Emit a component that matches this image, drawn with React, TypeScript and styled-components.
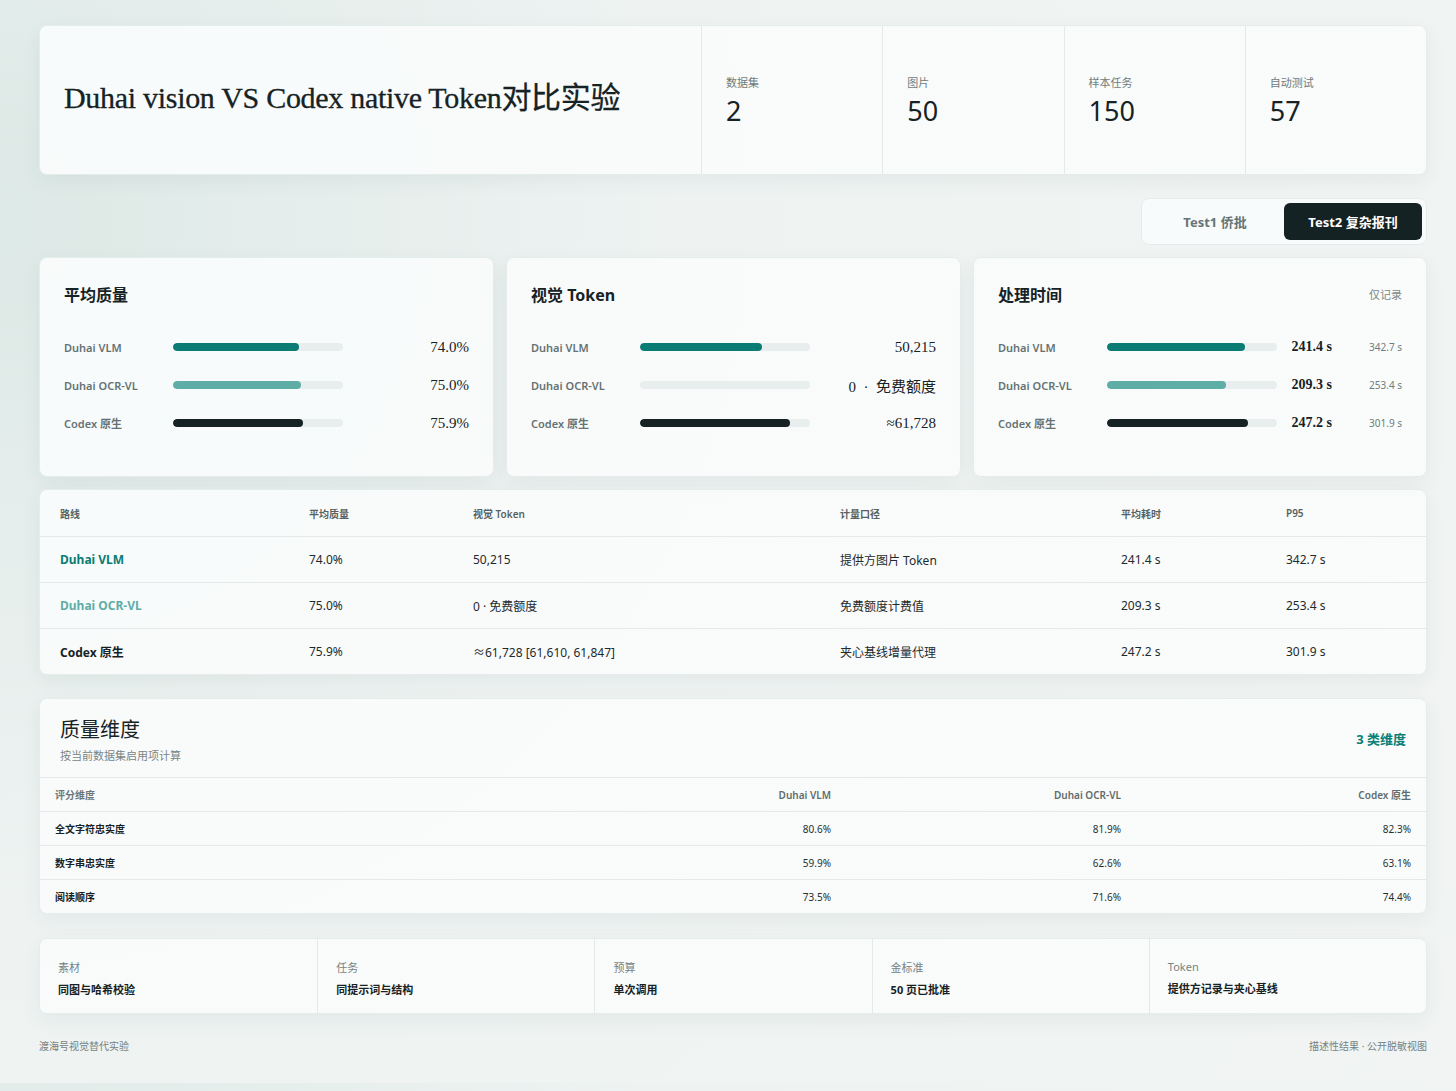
import styled, { createGlobalStyle } from "styled-components";

const Global = createGlobalStyle`
  body {
    margin: 0;
    background: radial-gradient(circle at 0% 20%, #dde9e6 0%, #eef3f2 40%, #f1f4f3 100%);
    font-family: "Noto Sans", "Noto Sans CJK SC", sans-serif;
    color: #162224;
  }
`;

const Page = styled.div`
  padding: 25px 29px 30px 39px;
  display: flex;
  flex-direction: column;
`;

const Card = styled.div`
  background: rgba(250, 252, 252, 0.92);
  border: 1px solid #e6ecec;
  border-radius: 8px;
  box-shadow: 0 6px 20px rgba(40, 70, 70, 0.06);
`;

const Header = styled(Card)`
  display: grid;
  grid-template-columns: 661px repeat(4, 1fr);
  height: 148px;
`;

const Title = styled.h1`
  margin: 0;
  padding-left: 24px;
  align-self: center;
  margin-top: -10px;
  font-family: "Liberation Serif", "Noto Sans CJK SC", serif;
  font-weight: 400;
  font-size: 30px;
  letter-spacing: -0.3px;
  -webkit-text-stroke: 0.3px #162224;
`;

const Stat = styled.div`
  border-left: 1px solid #e4eaea;
  padding: 48px 24px 0;
`;
const StatLabel = styled.div`
  font-size: 11px;
  color: #6e7b7c;
`;
const StatValue = styled.div`
  font-size: 27px;
  margin-top: 2px;
  color: #172224;
`;

const TabsRow = styled.div`
  display: flex;
  justify-content: flex-end;
  margin: 23px 0 12px;
`;
const Tabs = styled.div`
  display: flex;
  padding: 4px;
  background: #f8fbfb;
  border: 1px solid #e6ecec;
  border-radius: 8px;
`;
const Tab = styled.div<{ $active?: boolean }>`
  width: 138px;
  height: 37px;
  display: flex;
  align-items: center;
  justify-content: center;
  font-size: 13px;
  font-weight: 700;
  border-radius: 6px;
  color: ${(p) => (p.$active ? "#fff" : "#667475")};
  background: ${(p) => (p.$active ? "#152224" : "transparent")};
`;

const Metrics = styled.div`
  display: grid;
  grid-template-columns: 455px 455px 1fr;
  gap: 12px;
`;
const MetricCard = styled(Card)`
  height: 220px;
  box-sizing: border-box;
  padding: 24px 24px 0;
`;
const MetricHead = styled.div`
  display: flex;
  justify-content: space-between;
  align-items: center;
  margin-bottom: 22px;
`;
const MetricTitle = styled.div`
  font-size: 16px;
  font-weight: 700;
`;
const Note = styled.div`
  font-size: 11px;
  color: #7d898a;
`;
const BarRow = styled.div<{ $extra?: boolean }>`
  display: grid;
  grid-template-columns: ${(p) => (p.$extra ? "109px 170px 1fr 70px" : "109px 170px 1fr")};
  align-items: center;
  height: 38px;
`;
const BarLabel = styled.div`
  font-size: 11px;
  font-weight: 600;
  color: #657273;
`;
const Track = styled.div`
  height: 8px;
  border-radius: 4px;
  background: #e8eded;
  overflow: hidden;
`;
const Fill = styled.div<{ $c: string }>`
  height: 100%;
  border-radius: 4px;
  background: ${(p) => p.$c};
`;
const Val = styled.div`
  text-align: right;
  font-family: "Liberation Serif", "Noto Sans CJK SC", serif;
  font-size: 15px;
`;
const Sub = styled.div`
  text-align: right;
  font-size: 10px;
  color: #707d7e;
`;

const Table = styled(Card)`
  margin-top: 12px;
`;
const TRow = styled.div<{ $head?: boolean }>`
  display: grid;
  grid-template-columns: 249px 164px 367px 281px 165px 1fr;
  padding-left: 20px;
  align-items: center;
  height: ${(p) => (p.$head ? "46px" : "45px")};
  font-size: ${(p) => (p.$head ? "10px" : "12px")};
  font-weight: ${(p) => (p.$head ? 600 : 400)};
  color: ${(p) => (p.$head ? "#56625f" : "#1e2a2c")};
  & + & { border-top: 1px solid #e3e9e9; }
`;
const Route = styled.div<{ $c: string }>`
  font-weight: 700;
  color: ${(p) => p.$c};
`;

const Quality = styled(Card)`
  margin-top: 23px;
`;
const QHead = styled.div`
  display: flex;
  justify-content: space-between;
  align-items: center;
  padding: 15px 20px 14px;
  border-bottom: 1px solid #e3e9e9;
`;
const QTitle = styled.div`
  font-family: "Liberation Serif", "Noto Sans CJK SC", serif;
  font-size: 20px;
`;
const QSub = styled.div`
  font-size: 11px;
  color: #798586;
  margin-top: 4px;
`;
const QBadge = styled.div`
  font-size: 13px;
  font-weight: 700;
  color: #0a7f77;
`;
const QRow = styled.div<{ $head?: boolean }>`
  display: grid;
  grid-template-columns: 1fr 290px 290px 290px;
  padding: 0 15px;
  align-items: center;
  height: 33px;
  font-size: 10px;
  font-weight: ${(p) => (p.$head ? 600 : 400)};
  color: ${(p) => (p.$head ? "#5f6c6d" : "#26302f")};
  & + & { border-top: 1px solid #e3e9e9; }
  & > div:not(:first-child) { text-align: right; }
  & > div:first-child { font-weight: 600; color: ${(p) => (p.$head ? "#6b7778" : "#172224")}; }
`;

const Facts = styled(Card)`
  margin-top: 24px;
  display: grid;
  grid-template-columns: repeat(5, 1fr);
  height: 74px;
`;
const Fact = styled.div`
  padding: 20px 18px 0;
  & + & { border-left: 1px solid #e3e9e9; }
`;
const FactLabel = styled.div`
  font-size: 11px;
  color: #778384;
`;
const FactValue = styled.div`
  font-size: 11px;
  font-weight: 700;
  margin-top: 6px;
`;

const Foot = styled.div`
  display: flex;
  justify-content: space-between;
  margin-top: 24px;
  font-size: 10px;
  color: #768283;
`;

const C1 = "#0a7c74";
const C2 = "#5fada7";
const C3 = "#172224";

export default function App() {
  return (
    <>
      <Global />
      <Page>
        <Header>
          <Title>Duhai vision VS Codex native Token对比实验</Title>
          {[
            ["数据集", "2"],
            ["图片", "50"],
            ["样本任务", "150"],
            ["自动测试", "57"],
          ].map(([l, v]) => (
            <Stat key={l}>
              <StatLabel>{l}</StatLabel>
              <StatValue>{v}</StatValue>
            </Stat>
          ))}
        </Header>

        <TabsRow>
          <Tabs>
            <Tab>Test1 侨批</Tab>
            <Tab $active>Test2 复杂报刊</Tab>
          </Tabs>
        </TabsRow>

        <Metrics>
          <MetricCard>
            <MetricHead><MetricTitle>平均质量</MetricTitle></MetricHead>
            {[
              ["Duhai VLM", 74, C1, "74.0%"],
              ["Duhai OCR-VL", 75, C2, "75.0%"],
              ["Codex 原生", 76.5, C3, "75.9%"],
            ].map(([l, w, c, v]) => (
              <BarRow key={l as string}>
                <BarLabel>{l}</BarLabel>
                <Track><Fill $c={c as string} style={{ width: `${w}%` }} /></Track>
                <Val>{v}</Val>
              </BarRow>
            ))}
          </MetricCard>
          <MetricCard>
            <MetricHead><MetricTitle>视觉 Token</MetricTitle></MetricHead>
            {[
              ["Duhai VLM", 72, C1, "50,215"],
              ["Duhai OCR-VL", 0, C2, "0  ·  免费额度"],
              ["Codex 原生", 88, C3, "≈61,728"],
            ].map(([l, w, c, v]) => (
              <BarRow key={l as string}>
                <BarLabel>{l}</BarLabel>
                <Track><Fill $c={c as string} style={{ width: `${w}%` }} /></Track>
                <Val style={{ whiteSpace: "pre" }}>{v}</Val>
              </BarRow>
            ))}
          </MetricCard>
          <MetricCard>
            <MetricHead>
              <MetricTitle>处理时间</MetricTitle>
              <Note>仅记录</Note>
            </MetricHead>
            {[
              ["Duhai VLM", 81, C1, "241.4 s", "342.7 s"],
              ["Duhai OCR-VL", 70, C2, "209.3 s", "253.4 s"],
              ["Codex 原生", 83, C3, "247.2 s", "301.9 s"],
            ].map(([l, w, c, v, s]) => (
              <BarRow $extra key={l as string}>
                <BarLabel>{l}</BarLabel>
                <Track><Fill $c={c as string} style={{ width: `${w}%` }} /></Track>
                <Val style={{ fontWeight: 700, fontSize: 14 }}>{v}</Val>
                <Sub>{s}</Sub>
              </BarRow>
            ))}
          </MetricCard>
        </Metrics>

        <Table>
          <TRow $head>
            <div>路线</div><div>平均质量</div><div>视觉 Token</div><div>计量口径</div><div>平均耗时</div><div>P95</div>
          </TRow>
          {[
            ["Duhai VLM", C1, "74.0%", "50,215", "提供方图片 Token", "241.4 s", "342.7 s"],
            ["Duhai OCR-VL", C2, "75.0%", "0 · 免费额度", "免费额度计费值", "209.3 s", "253.4 s"],
            ["Codex 原生", C3, "75.9%", "≈61,728 [61,610, 61,847]", "夹心基线增量代理", "247.2 s", "301.9 s"],
          ].map(([n, c, ...rest]) => (
            <TRow key={n}>
              <Route $c={c}>{n}</Route>
              {rest.map((r, i) => <div key={i}>{r}</div>)}
            </TRow>
          ))}
        </Table>

        <Quality>
          <QHead>
            <div>
              <QTitle>质量维度</QTitle>
              <QSub>按当前数据集启用项计算</QSub>
            </div>
            <QBadge>3 类维度</QBadge>
          </QHead>
          <QRow $head>
            <div>评分维度</div><div>Duhai VLM</div><div>Duhai OCR-VL</div><div>Codex 原生</div>
          </QRow>
          {[
            ["全文字符忠实度", "80.6%", "81.9%", "82.3%"],
            ["数字串忠实度", "59.9%", "62.6%", "63.1%"],
            ["阅读顺序", "73.5%", "71.6%", "74.4%"],
          ].map((r) => (
            <QRow key={r[0]}>{r.map((c, i) => <div key={i}>{c}</div>)}</QRow>
          ))}
        </Quality>

        <Facts>
          {[
            ["素材", "同图与哈希校验"],
            ["任务", "同提示词与结构"],
            ["预算", "单次调用"],
            ["金标准", "50 页已批准"],
            ["Token", "提供方记录与夹心基线"],
          ].map(([l, v]) => (
            <Fact key={l}>
              <FactLabel>{l}</FactLabel>
              <FactValue>{v}</FactValue>
            </Fact>
          ))}
        </Facts>

        <Foot>
          <span>渡海号视觉替代实验</span>
          <span>描述性结果 · 公开脱敏视图</span>
        </Foot>
      </Page>
    </>
  );
}
